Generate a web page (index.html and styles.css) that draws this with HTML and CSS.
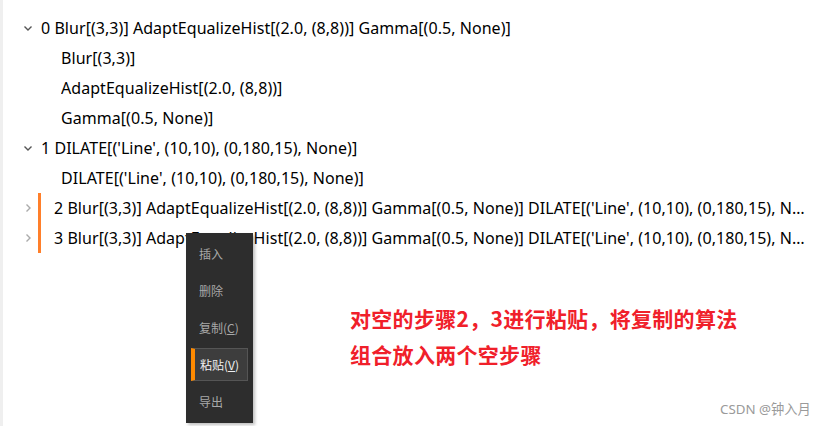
FILE: index.html
```html
<!DOCTYPE html>
<html>
<head>
<meta charset="utf-8">
<link rel="stylesheet" href="styles.css">
</head>
<body>
<div class="page">
  <div class="tree">
    <div class="row">
      <span class="chev open"><svg width="10" height="10" viewBox="0 0 10 10"><path d="M1.5 3.5 L5 7 L8.5 3.5" fill="none" stroke="#555" stroke-width="1.4"/></svg></span>
      <span class="label">0 Blur[(3,3)] AdaptEqualizeHist[(2.0, (8,8))] Gamma[(0.5, None)]</span>
    </div>
    <div class="row child"><span class="label">Blur[(3,3)]</span></div>
    <div class="row child"><span class="label">AdaptEqualizeHist[(2.0, (8,8))]</span></div>
    <div class="row child"><span class="label">Gamma[(0.5, None)]</span></div>
    <div class="row">
      <span class="chev open"><svg width="10" height="10" viewBox="0 0 10 10"><path d="M1.5 3.5 L5 7 L8.5 3.5" fill="none" stroke="#555" stroke-width="1.4"/></svg></span>
      <span class="label">1 DILATE[('Line', (10,10), (0,180,15), None)]</span>
    </div>
    <div class="row child"><span class="label">DILATE[('Line', (10,10), (0,180,15), None)]</span></div>
    <div class="marked">
      <div class="row">
        <span class="chev"><svg width="10" height="10" viewBox="0 0 10 10"><path d="M3.5 1.5 L7 5 L3.5 8.5" fill="none" stroke="#aaa" stroke-width="1.4"/></svg></span>
        <span class="label">2 Blur[(3,3)] AdaptEqualizeHist[(2.0, (8,8))] Gamma[(0.5, None)] DILATE[('Line', (10,10), (0,180,15), None)]</span>
      </div>
      <div class="row">
        <span class="chev"><svg width="10" height="10" viewBox="0 0 10 10"><path d="M3.5 1.5 L7 5 L3.5 8.5" fill="none" stroke="#aaa" stroke-width="1.4"/></svg></span>
        <span class="label">3 Blur[(3,3)] AdaptEqualizeHist[(2.0, (8,8))] Gamma[(0.5, None)] DILATE[('Line', (10,10), (0,180,15), None)]</span>
      </div>
    </div>
  </div>

  <div class="menu">
    <div class="item">插入</div>
    <div class="item">删除</div>
    <div class="item">复制(<u>C</u>)</div>
    <div class="item active">粘贴(<u>V</u>)</div>
    <div class="item">导出</div>
  </div>

  <div class="note">对空的步骤2，3进行粘贴，将复制的算法<br>组合放入两个空步骤</div>
  <div class="mark">CSDN @钟入月</div>
</div>
</body>
</html>
```
FILE: styles.css
```css
html, body {
  margin: 0;
  padding: 0;
  background: #fff;
}
.page {
  position: relative;
  width: 827px;
  height: 426px;
  overflow: hidden;
  border-left: 3px solid #efefef;
  box-sizing: border-box;
  font-family: "Noto Sans", "Noto Sans CJK SC", sans-serif;
}
.tree {
  padding-top: 13px;
  padding-left: 20px;
  width: 790px;
}
.row {
  height: 30px;
  display: flex;
  align-items: center;
  font-size: 16px;
  letter-spacing: 0.05px;
  color: #000;
  white-space: nowrap;
}
.chev {
  width: 18px;
  display: flex;
  align-items: center;
  justify-content: flex-start;
  flex: none;
}
.label {
  overflow: hidden;
  text-overflow: ellipsis;
  min-width: 0;
}
.child {
  padding-left: 38px;
}
.marked .row .chev {
  width: 15px;
}
.marked .label {
  border-left: 3px solid #ff7f2a;
  padding-left: 13px;
  line-height: 30px;
}
.menu {
  position: absolute;
  left: 183px;
  top: 233px;
  width: 67px;
  height: 190px;
  background: #2d2d2d;
  box-shadow: 2px 2px 3px rgba(0,0,0,0.25);
  padding: 4px 5px;
  box-sizing: border-box;
  display: flex;
  flex-direction: column;
  gap: 4px;
  font-family: "Noto Sans CJK SC", sans-serif;
  font-size: 12px;
}
.item {
  height: 33px;
  line-height: 33px;
  color: #a8a8a8;
  padding-left: 8px;
  box-sizing: border-box;
}
.item.active {
  background: #3d3d3d;
  border: 1px solid #555;
  border-left: 4px solid #ff8a00;
  padding-left: 5px;
  line-height: 31px;
  color: #f0f0f0;
}
.note {
  position: absolute;
  left: 347px;
  top: 300px;
  font-family: "Noto Sans CJK SC", sans-serif;
  font-weight: bold;
  font-size: 21px;
  letter-spacing: 0.3px;
  line-height: 36px;
  color: #f0202a;
}
.mark {
  position: absolute;
  left: 717px;
  top: 399px;
  font-family: "Noto Sans", "Noto Sans CJK SC", sans-serif;
  font-size: 13.3px;
  color: #9a9a9a;
}
```
